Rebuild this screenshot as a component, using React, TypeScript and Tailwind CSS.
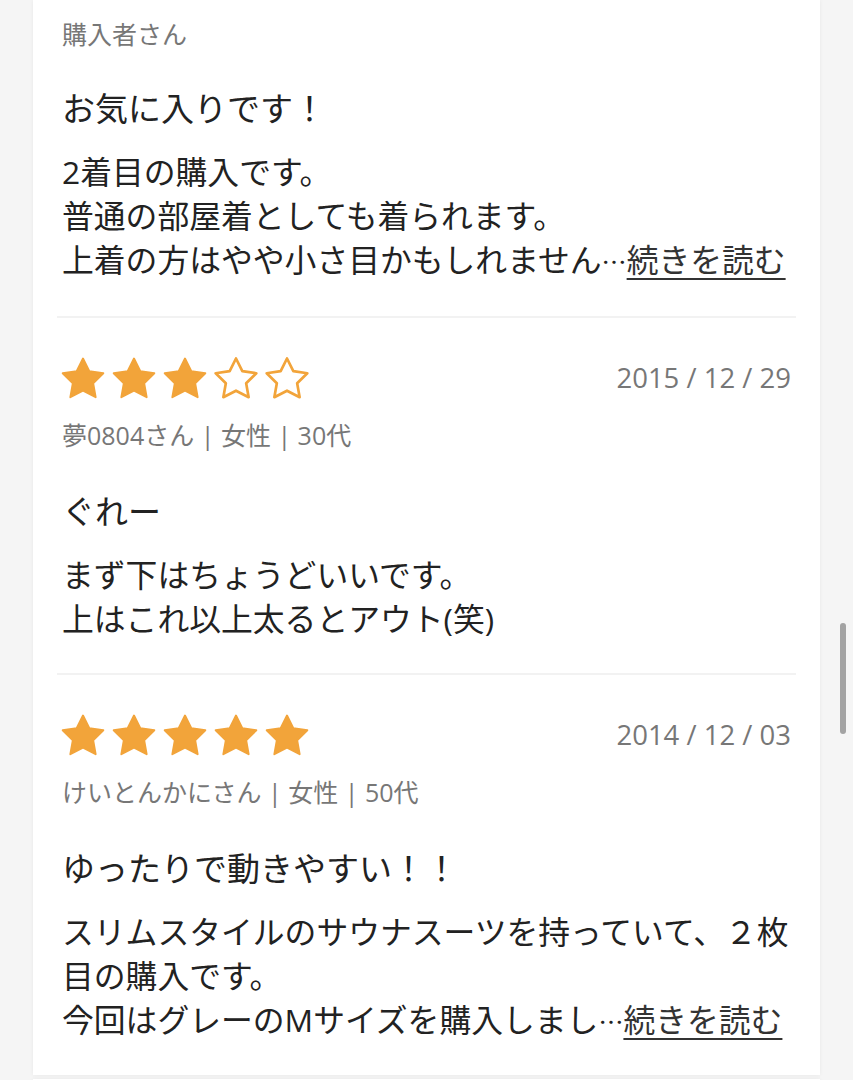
import React from 'react';

const jp = { fontFamily: '"Open Sans", "Noto Sans CJK JP", sans-serif' };
const cjk = { fontFamily: '"Noto Sans CJK JP", sans-serif' };

function Star({ filled }: { filled: boolean }) {
  return (
    <svg viewBox="0 0 24 24" className="w-[46px] h-[46px]">
      <polygon
        points="12,1.3 15.3,7.9 22.6,9 17.3,14.2 18.6,21.5 12,18.1 5.4,21.5 6.7,14.2 1.4,9 8.7,7.9"
        fill={filled ? '#f2a43a' : 'none'}
        stroke="#f2a43a"
        strokeWidth={filled ? 1 : 1.4}
        strokeLinejoin="round"
      />
    </svg>
  );
}

function Stars({ count }: { count: number }) {
  return (
    <div className="flex items-center gap-[5px] -ml-[2px]">
      {[1, 2, 3, 4, 5].map((i) => (
        <Star key={i} filled={i <= count} />
      ))}
    </div>
  );
}

function ReadMore() {
  return (
    <>
      <span style={cjk} className="text-[25px]">…</span>
      <span className="underline decoration-2 underline-offset-[6px] text-[#333]">続きを読む</span>
    </>
  );
}

type Review = {
  stars: number;
  date: string;
  meta: string;
  title: string;
  lines: React.ReactNode[];
};

const reviews: Review[] = [
  {
    stars: 3,
    date: '2015 / 12 / 29',
    meta: '夢0804さん | 女性 | 30代',
    title: 'ぐれー',
    lines: ['まず下はちょうどいいです。', '上はこれ以上太るとアウト(笑)'],
  },
  {
    stars: 5,
    date: '2014 / 12 / 03',
    meta: 'けいとんかにさん | 女性 | 50代',
    title: 'ゆったりで動きやすい！！',
    lines: [
      'スリムスタイルのサウナスーツを持っていて、２枚',
      '目の購入です。',
      <>
        今回はグレーのMサイズを購入しまし<ReadMore />
      </>,
    ],
  },
];

function ReviewItem({ review, last }: { review: Review; last?: boolean }) {
  return (
    <div className={`px-[5px] pt-[39px] pb-[32px] ${last ? '' : 'border-b-2 border-[#f2f2f2]'}`}>
      <div className="flex items-center justify-between h-[44px]">
        <Stars count={review.stars} />
        <span className="text-[27.5px] text-[#777777] -mt-[2px]">{review.date}</span>
      </div>
      <p className="mt-[16px] text-[25px] leading-[36px] text-[#777777]">{review.meta}</p>
      <h3 className="mt-[37px] text-[33px] leading-[44px] font-normal text-[#222222]">
        {review.title}
      </h3>
      <div className="mt-[19px] text-[31.8px] leading-[44px] text-[#222222]">
        {review.lines.map((l, i) => (
          <div key={i} className="whitespace-nowrap">
            {l}
          </div>
        ))}
      </div>
    </div>
  );
}

export default function App() {
  return (
    <div className="relative h-[1080px] overflow-hidden bg-[#f5f5f5]" style={jp}>
      <div className="mx-[33px] bg-white px-[24px] shadow-[0_0_4px_rgba(0,0,0,0.06)]">
        {/* first review, scrolled partly out of view */}
        <div className="px-[5px] pt-[16px] pb-[33px] border-b-2 border-[#f2f2f2]">
          <p className="text-[25px] leading-[36px] text-[#777777]">購入者さん</p>
          <h3 className="mt-[35px] text-[33px] leading-[44px] font-normal text-[#222222]">
            お気に入りです！
          </h3>
          <div className="mt-[19px] text-[31.8px] leading-[44px] text-[#222222]">
            <div className="whitespace-nowrap">2着目の購入です。</div>
            <div className="whitespace-nowrap">普通の部屋着としても着られます。</div>
            <div className="whitespace-nowrap">
              上着の方はやや小さ目かもしれません<ReadMore />
            </div>
          </div>
        </div>
        {reviews.map((r, i) => (
          <ReviewItem key={i} review={r} last={i === reviews.length - 1} />
        ))}
      </div>
      <div className="mx-[33px] mt-[4px] h-[40px] bg-white shadow-[0_0_4px_rgba(0,0,0,0.06)]" />
      <div className="absolute right-[7px] top-[623px] h-[111px] w-[6px] rounded-full bg-[#a3a3a3]" />
    </div>
  );
}
